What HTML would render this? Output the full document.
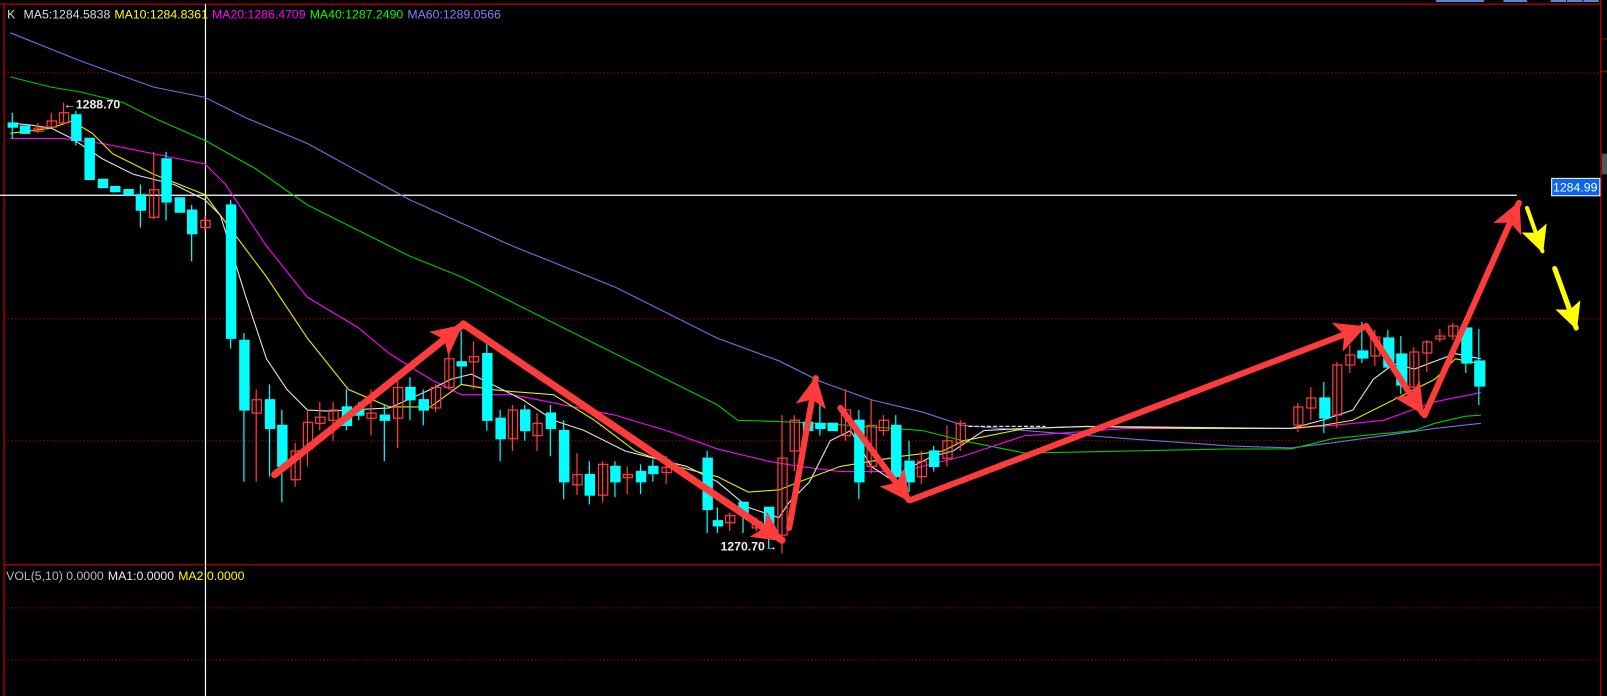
<!DOCTYPE html>
<html><head><meta charset="utf-8"><style>
html,body{margin:0;padding:0;background:#000;width:1607px;height:696px;overflow:hidden}
svg{display:block}
text{font-family:"Liberation Sans",sans-serif}
</style></head><body>
<svg width="1607" height="696" viewBox="0 0 1568 679" preserveAspectRatio="none">
<defs>
<marker id="ah" markerUnits="userSpaceOnUse" markerWidth="40" markerHeight="40" refX="28" refY="15" orient="auto"><path d="M0,0 L30,15 L0,30 L7,15 Z" fill="#ff3c3c"/></marker>
<marker id="ay" markerUnits="userSpaceOnUse" markerWidth="36" markerHeight="36" refX="24" refY="13" orient="auto"><path d="M0,0 L26,13 L0,26 L5,13 Z" fill="#ffff00"/></marker>
</defs>
<rect width="1568" height="679" fill="#000"/>
<g fill="#4a8ad8"><rect x="1401" y="0" width="47" height="2"/><rect x="1467" y="0" width="23" height="2"/><rect x="1513" y="0" width="15" height="2"/><rect x="1529" y="0" width="15" height="2"/><rect x="1545" y="0" width="15" height="2"/></g>
<line x1="0" y1="4" x2="1562" y2="4" stroke="#c00000" stroke-width="1.2"/>
<line x1="4" y1="4" x2="4" y2="679" stroke="#c00000" stroke-width="1.2"/>
<line x1="1562" y1="0" x2="1562" y2="679" stroke="#c00000" stroke-width="1.2"/>
<line x1="1562" y1="38" x2="1568" y2="38" stroke="#c00000"/><line x1="1562" y1="70" x2="1568" y2="70" stroke="#c00000"/>
<rect x="1563" y="150" width="5" height="20" fill="#555"/>
<g stroke="#a00000" stroke-dasharray="1.5,2" stroke-width="1">
<line x1="4" y1="71" x2="1562" y2="71"/><line x1="4" y1="311" x2="1562" y2="311"/><line x1="4" y1="430" x2="1562" y2="430"/>
<line x1="4" y1="593" x2="1562" y2="593"/><line x1="4" y1="644" x2="1562" y2="644"/>
</g>
<line x1="4" y1="551" x2="1562" y2="551" stroke="#c00000" stroke-width="1.2"/>
<line x1="0" y1="190.5" x2="1480" y2="190.5" stroke="#fff" stroke-width="1.2"/>
<line x1="200.5" y1="4" x2="200.5" y2="679" stroke="#fff" stroke-width="1.2"/>
<rect x="1514" y="174" width="47" height="17" fill="#0a64f0" stroke="#fff" stroke-width="1"/>
<text x="1537" y="187" fill="#fff" font-size="12" text-anchor="middle">1284.99</text>
<g fill="none" stroke-width="1.1">
<polyline stroke="#7070e0" points="10,32 80,60 150,85 200,95 240,115 300,140 400,195 500,240 600,280 700,330 760,352 800,372 850,390 900,402 940,415 1000,420 1100,428 1200,435 1260,437 1300,432 1350,425 1400,418 1445,413"/>
<polyline stroke="#00c800" points="10,75 50,85 80,90 120,100 150,115 200,137 250,165 300,200 350,225 400,250 450,270 500,295 550,320 600,345 650,370 700,395 720,410 780,412 830,415 900,420 940,430 1000,442 1100,440 1200,438 1260,438 1300,428 1340,424 1380,420 1400,413 1430,406 1445,405"/>
<polyline stroke="#ff00ff" points="10,135 60,135 100,140 150,150 200,160 220,180 260,240 300,290 350,320 380,345 420,370 450,385 500,385 550,395 600,405 650,420 700,438 750,450 780,455 820,460 880,460 940,445 1000,425 1100,418 1260,418 1300,415 1350,410 1400,392 1445,383"/>
<polyline stroke="#e6e600" points="10,130 50,125 70,118 90,130 110,150 150,170 200,190 230,230 260,270 300,330 340,380 380,397 420,397 450,375 480,380 500,382 540,385 580,410 620,440 660,455 700,465 730,480 760,478 780,470 820,455 880,445 920,440 940,430 1000,418 1060,416 1160,418 1260,418 1290,415 1320,410 1360,390 1400,370 1420,350 1445,355"/>
<polyline stroke="#e0e0e0" points="10,120 30,122 50,125 70,135 100,155 130,170 170,180 200,195 215,210 240,290 260,350 280,380 300,400 320,401 340,400 380,398 420,380 440,370 460,365 480,375 510,390 540,410 570,420 610,440 650,450 670,455 700,470 730,495 760,505 770,490 790,470 810,430 830,420 850,455 870,468 890,455 910,445 930,440 960,420 1000,418 1060,416 1260,418 1290,410 1320,400 1340,370 1360,355 1380,360 1420,345 1445,350"/>
</g>
<g stroke-width="1.2">
<g stroke="#00ffff" fill="#00ffff">
<path d="M12,110V135 M74,108V142 M137,180V222 M162,148V215 M187,200V255 M225,195V340 M238,325V470 M263,375V465 M275,400V490 M338,380V420 M350,392V410 M375,395V450 M400,368V410 M413,380V415 M450,323V375 M475,333V420 M488,400V450 M512,395V430 M537,395V445 M550,410V487 M575,450V492 M600,450V485 M625,453V482 M637,448V470 M690,440V520 M700,495V520 M725,490V520 M750,495V535 M800,380V425 M838,400V487 M874,405V475 M887,430V480 M911,435V460"/>
<rect x="8" y="120" width="9" height="4"/><rect x="20" y="123" width="9" height="7"/><rect x="70" y="112" width="9" height="25"/><rect x="83" y="135" width="9" height="40"/><rect x="96" y="175" width="9" height="8"/><rect x="108" y="182" width="9" height="5"/><rect x="121" y="185" width="9" height="5"/><rect x="133" y="190" width="9" height="15"/><rect x="158" y="155" width="9" height="42"/><rect x="171" y="193" width="9" height="14"/><rect x="183" y="205" width="9" height="23"/><rect x="221" y="200" width="9" height="130"/><rect x="234" y="332" width="9" height="68"/><rect x="259" y="390" width="9" height="28"/><rect x="271" y="415" width="9" height="40"/><rect x="334" y="397" width="9" height="18"/><rect x="346" y="400" width="9" height="5"/><rect x="371" y="405" width="9" height="5"/><rect x="396" y="378" width="9" height="12"/><rect x="409" y="390" width="9" height="10"/><rect x="446" y="353" width="9" height="4"/><rect x="471" y="345" width="9" height="65"/><rect x="484" y="408" width="9" height="20"/><rect x="508" y="400" width="9" height="20"/><rect x="533" y="403" width="9" height="15"/><rect x="546" y="420" width="9" height="50"/><rect x="571" y="463" width="9" height="20"/><rect x="596" y="455" width="9" height="15"/><rect x="621" y="460" width="9" height="10"/><rect x="633" y="455" width="9" height="7"/><rect x="686" y="447" width="9" height="50"/><rect x="696" y="508" width="9" height="5"/><rect x="721" y="490" width="9" height="12"/><rect x="746" y="495" width="9" height="25"/><rect x="784" y="412" width="9" height="8"/><rect x="796" y="413" width="9" height="5"/><rect x="808" y="413" width="9" height="7"/><rect x="834" y="410" width="9" height="60"/><rect x="870" y="415" width="9" height="50"/><rect x="883" y="450" width="9" height="20"/><rect x="907" y="440" width="9" height="15"/>
</g>
<g stroke="#ff3c3c" fill="none">
<path d="M37,120V130 M50,110V124 M62,100V122 M150,148V214 M200,210V225 M250,380V470 M288,432V475 M300,400V455 M312,392V420 M325,392V430 M362,380V425 M388,370V437 M425,375V402 M438,345V380 M462,333V380 M500,395V440 M524,403V440 M563,442V483 M588,450V490 M612,455V482 M650,445V472 M712,500V518 M738,505V518 M763,405V540 M775,405V460 M825,380V430 M850,390V462 M862,405V425 M899,440V472 M924,415V455 M937,410V440"/>
<rect x="33" y="125" width="9" height="3"/><rect x="46" y="118" width="9" height="6"/><rect x="58" y="110" width="9" height="10"/><rect x="146" y="185" width="9" height="27"/><rect x="196" y="215" width="9" height="7"/><rect x="246" y="390" width="9" height="13"/><rect x="284" y="440" width="9" height="28"/><rect x="296" y="412" width="9" height="26"/><rect x="308" y="407" width="9" height="6"/><rect x="321" y="400" width="9" height="10"/><rect x="358" y="403" width="9" height="5"/><rect x="384" y="378" width="9" height="30"/><rect x="421" y="378" width="9" height="20"/><rect x="434" y="350" width="9" height="28"/><rect x="458" y="348" width="9" height="5"/><rect x="496" y="400" width="9" height="28"/><rect x="520" y="413" width="9" height="12"/><rect x="559" y="463" width="9" height="10"/><rect x="584" y="453" width="9" height="30"/><rect x="608" y="463" width="9" height="3"/><rect x="646" y="456" width="9" height="5"/><rect x="708" y="503" width="9" height="7"/><rect x="734" y="509" width="9" height="6"/><rect x="759" y="447" width="9" height="75"/><rect x="771" y="410" width="9" height="30"/><rect x="821" y="400" width="9" height="25"/><rect x="846" y="415" width="9" height="40"/><rect x="858" y="410" width="9" height="10"/><rect x="895" y="450" width="9" height="15"/><rect x="920" y="430" width="9" height="17"/><rect x="933" y="413" width="9" height="19"/>
</g>
<line x1="945" y1="416" x2="1020" y2="416" stroke="#ddd" stroke-dasharray="4,2"/>
<g transform="scale(0.9756)">
<g stroke="#00ffff" fill="#00ffff">
<path d="M1362,322V363 M1388,330V368 M1401,336V394 M1466,328V373 M1479,329V405 M1324,382V433"/>
<rect x="1320" y="398" width="10" height="20"/><rect x="1358" y="351" width="10" height="7"/><rect x="1384" y="338" width="10" height="29"/><rect x="1397" y="354" width="10" height="31"/><rect x="1462" y="328" width="10" height="35"/><rect x="1475" y="361" width="10" height="25"/>
</g>
<g stroke="#ff3c3c" fill="none">
<path d="M1298,403V432 M1311,387V420 M1337,362V428 M1350,345V373 M1375,330V366 M1414,347V392 M1427,340V372 M1440,329V342 M1453,323V340"/>
<rect x="1294" y="407" width="9" height="18"/><rect x="1307" y="398" width="9" height="10"/><rect x="1333" y="365" width="9" height="50"/><rect x="1346" y="355" width="9" height="10"/><rect x="1371" y="337" width="9" height="19"/><rect x="1410" y="352" width="9" height="35"/><rect x="1423" y="342" width="9" height="11"/><rect x="1436" y="336" width="9" height="3"/><rect x="1449" y="326" width="9" height="10"/>
</g>
</g>
</g>
<g stroke="#ff3c3c" stroke-linecap="round" fill="none">
<line x1="268" y1="463" x2="450" y2="318" stroke-width="7" marker-end="url(#ah)"/>
<line x1="452" y1="316" x2="763" y2="527" stroke-width="7" marker-end="url(#ah)"/>
<line x1="770" y1="515" x2="796" y2="369" stroke-width="6" marker-end="url(#ah)"/>
<line x1="820" y1="398" x2="887" y2="488" stroke-width="6" marker-end="url(#ah)"/>
<line x1="888" y1="488" x2="1331" y2="319" stroke-width="6" marker-end="url(#ah)"/>
<line x1="1333" y1="318" x2="1388" y2="403" stroke-width="6" marker-end="url(#ah)"/>
<line x1="1390" y1="405" x2="1482" y2="198" stroke-width="6" marker-end="url(#ah)"/>
</g>
<g stroke="#ffff00" stroke-linecap="round">
<line x1="1490" y1="203" x2="1505" y2="245" stroke-width="4" marker-end="url(#ay)"/>
<line x1="1517" y1="262" x2="1538" y2="320" stroke-width="5" marker-end="url(#ay)"/>
</g>
<text x="7" y="18" font-size="12"><tspan fill="#ddd">K</tspan><tspan fill="#ddd" dx="8">MA5:1284.5838</tspan><tspan fill="#ffff00" dx="4">MA10:1284.8361</tspan><tspan fill="#ff00ff" dx="4">MA20:1286.4709</tspan><tspan fill="#00ff00" dx="4">MA40:1287.2490</tspan><tspan fill="#8080ff" dx="4">MA60:1289.0566</tspan></text>
<text x="62" y="106" font-size="12" fill="#eee" font-weight="bold">←1288.70</text>
<text x="703" y="537" font-size="12" fill="#eee" font-weight="bold">1270.70→</text>
<text x="6" y="566" font-size="12"><tspan fill="#bbb">VOL(5,10) 0.0000</tspan><tspan fill="#eee" dx="4">MA1:0.0000</tspan><tspan fill="#ffff00" dx="4">MA2:0.0000</tspan></text>
</svg>
</body></html>
